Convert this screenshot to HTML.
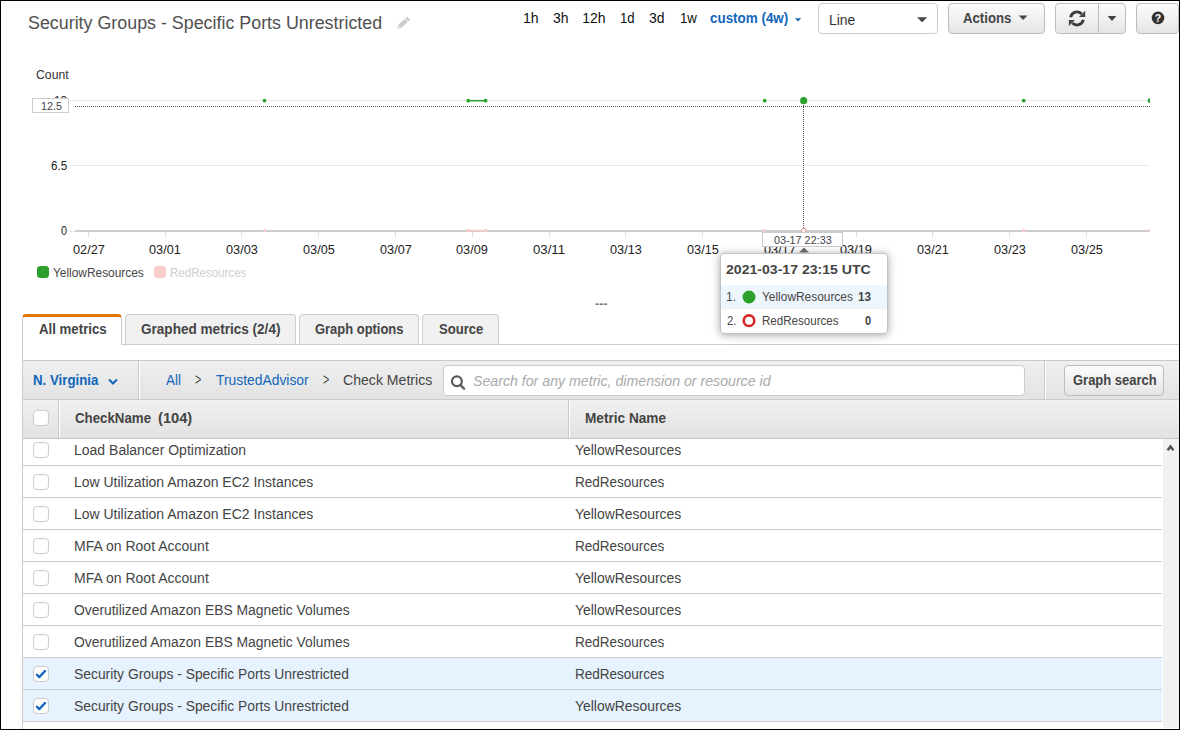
<!DOCTYPE html>
<html lang="en">
<head>
<meta charset="utf-8">
<title>CloudWatch Metrics - Security Groups - Specific Ports Unrestricted</title>
<style>
*{box-sizing:border-box}
html,body{margin:0;padding:0}
body{width:1180px;height:730px;overflow:hidden;background:#fff;position:relative;font-family:'Liberation Sans',sans-serif;font-size:14px;color:#444}
.abs{position:absolute}
.t{position:absolute;white-space:pre;line-height:1;transform-origin:0 0;z-index:5}
.frame{position:absolute;left:0;top:0;width:1180px;height:730px;border:1px solid #000;z-index:50;pointer-events:none}
.btn{position:absolute;top:3px;height:31px;border:1px solid #bdbdbd;border-radius:4px;background:linear-gradient(#fcfcfc,#e5e5e5)}
.sel{position:absolute;left:818px;top:3px;width:120px;height:31px;border:1px solid #ccc;border-radius:4px;background:#fff}
.tab{position:absolute;top:314px;height:31px;border:1px solid #ccc;border-bottom:none;border-radius:4px 4px 0 0;background:#f1f1f1}
.tab.on{background:#fff;border-top:3px solid #e07700;z-index:2}
.tabline{position:absolute;left:22px;top:344px;width:1157px;height:1px;background:#ccc;z-index:1}
.panel-l{position:absolute;left:22px;top:344px;width:1px;height:386px;background:#ccc;z-index:3}
.toolbar{position:absolute;left:23px;top:360px;width:1156px;height:40px;background:linear-gradient(#efefef,#e3e3e3);border-top:1px solid #c9c9c9;border-bottom:1px solid #ccc}
.vdiv{position:absolute;top:361px;height:38px;width:2px;border-left:1px solid #ccc;border-right:1px solid #fff}
.search{position:absolute;left:443px;top:365px;width:582px;height:31px;border:1px solid #ccc;border-radius:4px;background:#fff}
.thead{position:absolute;left:23px;top:400px;width:1156px;height:39px;background:linear-gradient(#f0f0f0,#e2e2e2);border-bottom:1px solid #c6c6c6;z-index:2}
.hdiv{position:absolute;top:400px;height:38px;width:2px;border-left:1px solid #c8c8c8;border-right:1px solid #fff;z-index:3}
.row{position:absolute;left:23px;width:1139px;height:32px;border-bottom:1px solid #ccc;background:#fff}
.row.on{background:#e6f2fd}
.cb{position:absolute;left:33px;width:16px;height:16px;border:1px solid #ccc;border-radius:4px;background:#fff;z-index:3}
.sb{position:absolute;left:1163px;top:439px;width:16px;height:289px;background:#f1f1f1}
.tip{position:absolute;z-index:8;background:#fff}
</style>
</head>
<body>
<div class="frame"></div>

<!-- header controls -->
<div class="sel"></div>
<div class="btn" style="left:948px;width:97px"></div>
<div class="btn" style="left:1055px;width:71px"></div>
<div class="abs" style="left:1098px;top:4px;width:1px;height:29px;background:#bdbdbd"></div>
<div class="btn" style="left:1136px;width:43px"></div>

<!-- tabs -->
<div class="tabline"></div>
<div class="tab on" style="left:22px;width:100px"></div>
<div class="tab" style="left:125px;width:171px"></div>
<div class="tab" style="left:299px;width:120px"></div>
<div class="tab" style="left:422px;width:77px"></div>
<div class="panel-l"></div>

<!-- toolbar -->
<div class="toolbar"></div>
<div class="vdiv" style="left:138px"></div>
<div class="vdiv" style="left:1044px"></div>
<div class="search"></div>
<div class="btn" style="left:1064px;top:365px;width:100px;height:31px"></div>

<!-- table -->
<div class="row" style="top:434px"></div><div class="cb" style="top:442px"></div>
<div class="row" style="top:466px"></div><div class="cb" style="top:474px"></div>
<div class="row" style="top:498px"></div><div class="cb" style="top:506px"></div>
<div class="row" style="top:530px"></div><div class="cb" style="top:538px"></div>
<div class="row" style="top:562px"></div><div class="cb" style="top:570px"></div>
<div class="row" style="top:594px"></div><div class="cb" style="top:602px"></div>
<div class="row" style="top:626px"></div><div class="cb" style="top:634px"></div>
<div class="row on" style="top:658px"></div><div class="cb" style="top:666px"></div>
<div class="row on" style="top:690px"></div><div class="cb" style="top:698px"></div>
<div class="thead"></div>
<div class="hdiv" style="left:58px"></div>
<div class="hdiv" style="left:568px"></div>
<div class="cb" style="top:410px;z-index:4"></div>
<div class="sb"></div>

<!-- chart + icons -->
<svg class="abs" style="left:0;top:0;z-index:4" width="1180" height="730" viewBox="0 0 1180 730" font-family="'Liberation Sans', sans-serif">
<line x1="70" x2="1150" y1="100.5" y2="100.5" stroke="#e9e9e9" stroke-width="1"/>
<line x1="70" x2="1150" y1="165.5" y2="165.5" stroke="#e9e9e9" stroke-width="1"/>
<line x1="70" x2="1150" y1="231.5" y2="231.5" stroke="#e9e9e9" stroke-width="1"/>
<rect x="75" y="230" width="1075" height="2" fill="#ccc"/>
<line x1="88.5" x2="88.5" y1="232" y2="237" stroke="#ddd" stroke-width="1"/>
<line x1="165.5" x2="165.5" y1="232" y2="237" stroke="#ddd" stroke-width="1"/>
<line x1="241.5" x2="241.5" y1="232" y2="237" stroke="#ddd" stroke-width="1"/>
<line x1="318.5" x2="318.5" y1="232" y2="237" stroke="#ddd" stroke-width="1"/>
<line x1="395.5" x2="395.5" y1="232" y2="237" stroke="#ddd" stroke-width="1"/>
<line x1="472.5" x2="472.5" y1="232" y2="237" stroke="#ddd" stroke-width="1"/>
<line x1="549.5" x2="549.5" y1="232" y2="237" stroke="#ddd" stroke-width="1"/>
<line x1="625.5" x2="625.5" y1="232" y2="237" stroke="#ddd" stroke-width="1"/>
<line x1="702.5" x2="702.5" y1="232" y2="237" stroke="#ddd" stroke-width="1"/>
<line x1="779.5" x2="779.5" y1="232" y2="237" stroke="#ddd" stroke-width="1"/>
<line x1="856.5" x2="856.5" y1="232" y2="237" stroke="#ddd" stroke-width="1"/>
<line x1="932.5" x2="932.5" y1="232" y2="237" stroke="#ddd" stroke-width="1"/>
<line x1="1009.5" x2="1009.5" y1="232" y2="237" stroke="#ddd" stroke-width="1"/>
<line x1="1086.5" x2="1086.5" y1="232" y2="237" stroke="#ddd" stroke-width="1"/>
<line x1="75" x2="1150" y1="106.5" y2="106.5" stroke="#555" stroke-width="1" stroke-dasharray="1 1"/>
<g fill="#f6cccc" stroke="none">
<circle cx="264.5" cy="230.5" r="1.7"/>
<circle cx="468.2" cy="230.5" r="1.7"/>
<circle cx="485.6" cy="230.5" r="1.7"/>
<circle cx="764.7" cy="230.5" r="1.7"/>
<circle cx="1023.7" cy="230.5" r="1.7"/>
</g>
<line x1="468.2" x2="485.6" y1="230.5" y2="230.5" stroke="#f6cccc" stroke-width="1.5"/>
<path d="M1150 228.8 A1.7 1.7 0 0 0 1150 232.2 Z" fill="#f6cccc"/>
<g fill="#2ca02c" stroke="none">
<circle cx="264.5" cy="100.7" r="1.9"/>
<circle cx="468.2" cy="100.7" r="1.9"/>
<circle cx="485.6" cy="100.7" r="1.9"/>
<circle cx="764.7" cy="100.7" r="1.9"/>
<circle cx="1023.7" cy="100.7" r="1.9"/>
</g>
<line x1="468.2" x2="485.6" y1="100.7" y2="100.7" stroke="#2ca02c" stroke-width="1.6"/>
<path d="M1150 98.3 A2.4 2.4 0 0 0 1150 103.1 Z" fill="#2ca02c"/>
<line x1="803.5" x2="803.5" y1="101" y2="230" stroke="#555" stroke-width="1" stroke-dasharray="1 1"/>
<circle cx="803.7" cy="100.7" r="3.6" fill="#2ca02c"/>
<circle cx="803.7" cy="230.5" r="2.3" fill="#fff" stroke="#e88" stroke-width="1"/>
<rect x="37" y="266" width="12" height="12" rx="3.5" fill="#2ca02c"/>
<rect x="154" y="266" width="12" height="12" rx="3.5" fill="#f6cccc"/>
<g transform="translate(397.3,28.6) rotate(-42.6)" fill="#cdcdcd"><path d="M0 0 L3.4 -2.2 L12.3 -2.2 L12.3 2.2 L3.4 2.2 Z"/><rect x="12.9" y="-2.2" width="2.5" height="4.4" rx="0.6"/><path d="M1.5 0 L3.3 -1.1 L3.3 1.1 Z" fill="#fff" fill-opacity=".85"/></g>
<path d="M795 18.3 H801.2 L798.1 21.4 Z" fill="#1166bb"/>
<path d="M917 17.2 H927.2 L922.1 22.2 Z" fill="#444"/>
<path d="M1018.8 15.4 H1027.4 L1023.1 20 Z" fill="#444"/>
<g fill="none" stroke="#3c3c3c" stroke-width="2.9"><path d="M1070.7 17.2 A6.4 6.4 0 0 1 1081.6 13.9"/><path d="M1083.3 19.7 A6.4 6.4 0 0 1 1072.4 22.9"/></g>
<path d="M1085.2 10.8 V17 H1079 Z M1068.9 26.1 V20 H1075 Z" fill="#444"/>
<path d="M1107.6 16 H1116.4 L1112 21 Z" fill="#444"/>
<circle cx="1158" cy="17.9" r="6.3" fill="#333"/>
<text x="1158" y="21.6" text-anchor="middle" font-size="10.5" font-weight="700" fill="#fff">?</text>
<polyline points="109,379.4 113,383.4 117,379.4" fill="none" stroke="#1166bb" stroke-width="2.1"/>
<circle cx="456.9" cy="381.3" r="4.9" fill="none" stroke="#5a5a5a" stroke-width="2.2"/><line x1="460.6" y1="385.1" x2="464.1" y2="388.7" stroke="#5a5a5a" stroke-width="2.3" stroke-linecap="round"/>
<polyline points="1167.6,450.2 1170.5,446.4 1173.4,450.2" fill="none" stroke="#505050" stroke-width="2.4"/>
<polyline points="36.9,674.7 39.3,677.1 45.0,671.0" fill="none" stroke="#1166bb" stroke-width="2.3" stroke-linecap="round" stroke-linejoin="round"/>
<polyline points="36.9,706.7 39.3,709.1 45.0,703.0" fill="none" stroke="#1166bb" stroke-width="2.3" stroke-linecap="round" stroke-linejoin="round"/>
</svg>

<!-- hover overlays -->
<div class="tip" style="left:32px;top:98px;width:37px;height:15px;border:1px solid #ccc"></div>
<div class="tip" style="left:762px;top:232px;width:81px;height:15px;border:1px solid #ccc"></div>
<div class="tip" style="left:720px;top:253px;width:168px;height:81px;border:1px solid #c2c2c2;border-radius:4px;box-shadow:0 1px 8px rgba(0,0,0,.36)"></div>
<div class="tip" style="left:721px;top:285px;width:166px;height:24px;background:#eef6fd"></div>
<svg class="abs" style="left:700px;top:240px;z-index:9" width="200" height="100" viewBox="700 240 200 100">
<path d="M804 247.4 L809 252.6 H799 Z" fill="#666"/>
<circle cx="749" cy="297" r="6.5" fill="#2ca02c"/>
<circle cx="749" cy="320.7" r="5.3" fill="#fff" stroke="#d62728" stroke-width="2.6"/>
</svg>

<span class="t" style="left:27.76px;top:14px;font-size:18px;color:#505050;transform:scale(0.9917,1.0)">Security Groups - Specific Ports Unrestricted</span>
<span class="t" style="left:523.00px;top:11px;font-size:14px;color:#111;transform:scale(1.0036,1.0)">1h</span>
<span class="t" style="left:552.50px;top:11px;font-size:14px;color:#111;transform:scale(0.9965,1.0)">3h</span>
<span class="t" style="left:582.30px;top:11px;font-size:14px;color:#111;transform:scale(1.0000,1.0)">12h</span>
<span class="t" style="left:619.96px;top:11px;font-size:14px;color:#111;transform:scale(0.9382,1.0)">1d</span>
<span class="t" style="left:649.30px;top:11px;font-size:14px;color:#111;transform:scale(0.9965,1.0)">3d</span>
<span class="t" style="left:679.85px;top:11px;font-size:14px;color:#111;transform:scale(0.9471,1.0)">1w</span>
<span class="t" style="left:709.82px;top:11px;font-size:14px;color:#1166bb;transform:scale(0.9578,1.0);font-weight:700">custom (4w)</span>
<span class="t" style="left:828.56px;top:13px;font-size:14px;color:#333;transform:scale(0.9959,1.0)">Line</span>
<span class="t" style="left:963.06px;top:11px;font-size:14px;color:#444;transform:scale(0.9406,1.0);font-weight:700">Actions</span>
<span class="t" style="left:38.56px;top:322px;font-size:14px;color:#444;transform:scale(0.9456,1.0);font-weight:700">All metrics</span>
<span class="t" style="left:141.02px;top:322px;font-size:14px;color:#444;transform:scale(0.9688,1.0);font-weight:700">Graphed metrics (2/4)</span>
<span class="t" style="left:315.14px;top:322px;font-size:14px;color:#444;transform:scale(0.9249,1.0);font-weight:700">Graph options</span>
<span class="t" style="left:438.53px;top:322px;font-size:14px;color:#444;transform:scale(0.9333,1.0);font-weight:700">Source</span>
<span class="t" style="left:33.15px;top:373px;font-size:14px;color:#1166bb;transform:scale(0.9471,1.0);font-weight:700">N. Virginia</span>
<span class="t" style="left:165.90px;top:373px;font-size:14px;color:#1166bb;transform:scale(0.9627,1.0)">All</span>
<span class="t" style="left:194.82px;top:371px;font-size:14px;color:#444;transform:scale(0.7704,1.2)">&gt;</span>
<span class="t" style="left:216.35px;top:373px;font-size:14px;color:#1166bb;transform:scale(0.9898,1.0)">TrustedAdvisor</span>
<span class="t" style="left:323.32px;top:371px;font-size:14px;color:#444;transform:scale(0.7704,1.2)">&gt;</span>
<span class="t" style="left:343.14px;top:373px;font-size:14px;color:#444;transform:scale(1.0069,1.0)">Check Metrics</span>
<span class="t" style="left:472.89px;top:374px;font-size:14px;color:#aaa;transform:scale(1.0116,1.0);font-style:italic">Search for any metric, dimension or resource id</span>
<span class="t" style="left:1072.74px;top:373px;font-size:14px;color:#444;transform:scale(0.9270,1.0);font-weight:700">Graph search</span>
<span class="t" style="left:75.13px;top:411px;font-size:14px;color:#444;transform:scale(0.9489,1.0);font-weight:700">CheckName</span>
<span class="t" style="left:157.52px;top:411px;font-size:14px;color:#444;transform:scale(1.0464,1.0);font-weight:700">(104)</span>
<span class="t" style="left:585.33px;top:411px;font-size:14px;color:#444;transform:scale(0.9737,1.0);font-weight:700">Metric Name</span>
<span class="t" style="left:73.65px;top:443px;font-size:14px;color:#444;transform:scale(1.0003,1.0)">Load Balancer Optimization</span>
<span class="t" style="left:575.20px;top:443px;font-size:14px;color:#444;transform:scale(0.9943,1.0)">YellowResources</span>
<span class="t" style="left:73.65px;top:475px;font-size:14px;color:#444;transform:scale(0.9983,1.0)">Low Utilization Amazon EC2 Instances</span>
<span class="t" style="left:575.29px;top:475px;font-size:14px;color:#444;transform:scale(0.9648,1.0)">RedResources</span>
<span class="t" style="left:73.65px;top:507px;font-size:14px;color:#444;transform:scale(0.9983,1.0)">Low Utilization Amazon EC2 Instances</span>
<span class="t" style="left:575.20px;top:507px;font-size:14px;color:#444;transform:scale(0.9943,1.0)">YellowResources</span>
<span class="t" style="left:73.65px;top:539px;font-size:14px;color:#444;transform:scale(1.0011,1.0)">MFA on Root Account</span>
<span class="t" style="left:575.29px;top:539px;font-size:14px;color:#444;transform:scale(0.9648,1.0)">RedResources</span>
<span class="t" style="left:73.65px;top:571px;font-size:14px;color:#444;transform:scale(1.0011,1.0)">MFA on Root Account</span>
<span class="t" style="left:575.20px;top:571px;font-size:14px;color:#444;transform:scale(0.9943,1.0)">YellowResources</span>
<span class="t" style="left:74.16px;top:603px;font-size:14px;color:#444;transform:scale(0.9897,1.0)">Overutilized Amazon EBS Magnetic Volumes</span>
<span class="t" style="left:575.20px;top:603px;font-size:14px;color:#444;transform:scale(0.9943,1.0)">YellowResources</span>
<span class="t" style="left:74.16px;top:635px;font-size:14px;color:#444;transform:scale(0.9897,1.0)">Overutilized Amazon EBS Magnetic Volumes</span>
<span class="t" style="left:575.29px;top:635px;font-size:14px;color:#444;transform:scale(0.9648,1.0)">RedResources</span>
<span class="t" style="left:74.16px;top:667px;font-size:14px;color:#444;transform:scale(0.9897,1.0)">Security Groups - Specific Ports Unrestricted</span>
<span class="t" style="left:575.29px;top:667px;font-size:14px;color:#444;transform:scale(0.9648,1.0)">RedResources</span>
<span class="t" style="left:74.16px;top:699px;font-size:14px;color:#444;transform:scale(0.9897,1.0)">Security Groups - Specific Ports Unrestricted</span>
<span class="t" style="left:575.20px;top:699px;font-size:14px;color:#444;transform:scale(0.9943,1.0)">YellowResources</span>
<span class="t" style="left:35.99px;top:69px;font-size:12px;color:#333;transform:scale(1.0190,1.0)">Count</span>
<span class="t" style="left:53.51px;top:95px;font-size:12px;color:#222;transform:scale(0.9872,1.0)">13</span>
<span class="t" style="left:50.72px;top:160px;font-size:12px;color:#222;transform:scale(0.9651,1.0)">6.5</span>
<span class="t" style="left:60.75px;top:225px;font-size:12px;color:#222;transform:scale(0.9043,1.0)">0</span>
<span class="t" style="left:72.57px;top:244px;font-size:12px;color:#222;transform:scale(1.0586,1.0)">02/27</span>
<span class="t" style="left:149.35px;top:244px;font-size:12px;color:#222;transform:scale(1.0586,1.0)">03/01</span>
<span class="t" style="left:226.13px;top:244px;font-size:12px;color:#222;transform:scale(1.0586,1.0)">03/03</span>
<span class="t" style="left:302.91px;top:244px;font-size:12px;color:#222;transform:scale(1.0586,1.0)">03/05</span>
<span class="t" style="left:379.69px;top:244px;font-size:12px;color:#222;transform:scale(1.0586,1.0)">03/07</span>
<span class="t" style="left:456.47px;top:244px;font-size:12px;color:#222;transform:scale(1.0586,1.0)">03/09</span>
<span class="t" style="left:533.23px;top:244px;font-size:12px;color:#222;transform:scale(1.0964,1.0)">03/11</span>
<span class="t" style="left:610.03px;top:244px;font-size:12px;color:#222;transform:scale(1.0586,1.0)">03/13</span>
<span class="t" style="left:686.81px;top:244px;font-size:12px;color:#222;transform:scale(1.0586,1.0)">03/15</span>
<span class="t" style="left:763.59px;top:244px;font-size:12px;color:#222;transform:scale(1.0586,1.0)">03/17</span>
<span class="t" style="left:840.37px;top:244px;font-size:12px;color:#222;transform:scale(1.0586,1.0)">03/19</span>
<span class="t" style="left:917.15px;top:244px;font-size:12px;color:#222;transform:scale(1.0586,1.0)">03/21</span>
<span class="t" style="left:993.93px;top:244px;font-size:12px;color:#222;transform:scale(1.0586,1.0)">03/23</span>
<span class="t" style="left:1070.71px;top:244px;font-size:12px;color:#222;transform:scale(1.0586,1.0)">03/25</span>
<span class="t" style="left:53.15px;top:267px;font-size:12px;color:#444;transform:scale(0.9912,1.0)">YellowResources</span>
<span class="t" style="left:169.74px;top:267px;font-size:12px;color:#cfcfcf;transform:scale(0.9615,1.0)">RedResources</span>
<span class="t" style="left:594.83px;top:293px;font-size:11px;color:#777;transform:scale(1.1400,1.9)">---</span>
<span class="t" style="left:40.56px;top:101px;font-size:11px;color:#444;transform:scale(0.9877,1.0);z-index:10">12.5</span>
<span class="t" style="left:774.11px;top:235px;font-size:11px;color:#444;transform:scale(0.9818,1.0);z-index:10">03-17 22:33</span>
<span class="t" style="left:726.46px;top:263px;font-size:13px;color:#444;transform:scale(1.0825,1.0);font-weight:700;z-index:10">2021-03-17 23:15 UTC</span>
<span class="t" style="left:726.00px;top:291px;font-size:12px;color:#444;transform:scale(1.0000,1.0);z-index:10">1.</span>
<span class="t" style="left:761.75px;top:291px;font-size:12px;color:#444;transform:scale(0.9923,1.0);z-index:10">YellowResources</span>
<span class="t" style="left:858.07px;top:291px;font-size:12px;color:#444;transform:scale(0.9714,1.0);font-weight:700;z-index:10">13</span>
<span class="t" style="left:726.53px;top:315px;font-size:12px;color:#444;transform:scale(0.9412,1.0);z-index:10">2.</span>
<span class="t" style="left:761.74px;top:315px;font-size:12px;color:#444;transform:scale(0.9641,1.0);z-index:10">RedResources</span>
<span class="t" style="left:864.94px;top:315px;font-size:12px;color:#444;transform:scale(0.9217,1.0);font-weight:700;z-index:10">0</span>
</body>
</html>
